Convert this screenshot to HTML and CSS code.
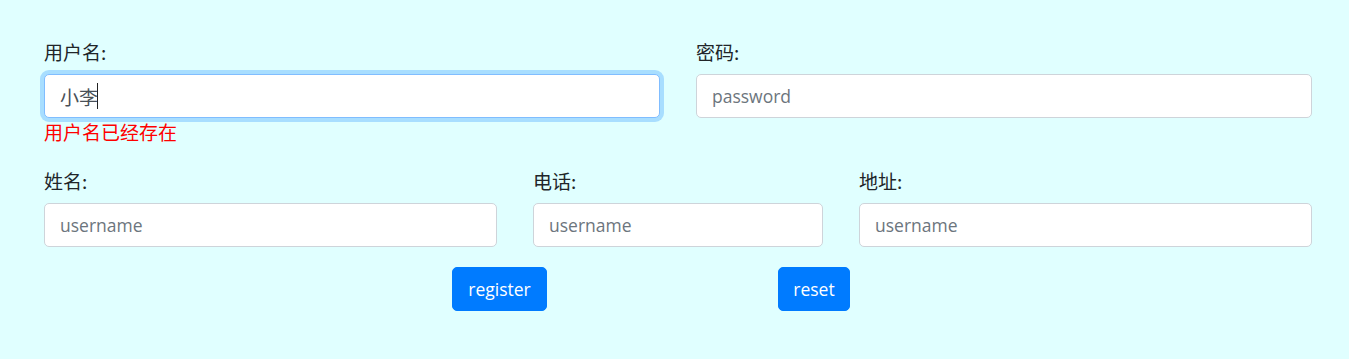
FILE: index.html
```html
<!DOCTYPE html>
<html lang="zh-CN">
<head>
<meta charset="utf-8">
<title>注册</title>
<link rel="stylesheet" href="styles.css">
</head>
<body>
<form class="reg-form">
  <div class="row row-two">
    <div class="field">
      <label class="field-label">用户名:</label>
      <div class="input-wrap">
        <input class="field-input is-focus" type="text" value="小李">
        <span class="caret"></span>
      </div>
      <div class="field-error">用户名已经存在</div>
    </div>
    <div class="field">
      <label class="field-label">密码:</label>
      <input class="field-input" type="password" placeholder="password">
    </div>
  </div>
  <div class="row row-three">
    <div class="field">
      <label class="field-label">姓名:</label>
      <input class="field-input" type="text" placeholder="username">
    </div>
    <div class="field">
      <label class="field-label">电话:</label>
      <input class="field-input" type="text" placeholder="username">
    </div>
    <div class="field">
      <label class="field-label">地址:</label>
      <input class="field-input" type="text" placeholder="username">
    </div>
  </div>
  <div class="actions">
    <button type="button" class="btn btn-register">register</button>
    <button type="button" class="btn btn-reset">reset</button>
  </div>
</form>
</body>
</html>
```
FILE: styles.css
```css
html, body {
  margin: 0;
  padding: 0;
  background: #e0ffff;
}
body {
  font-family: "Open Sans", "Noto Sans CJK SC", sans-serif;
  font-size: 18px;
  line-height: 27px;
  color: #212529;
}
.reg-form {
  width: 1268px;
  padding: 38px 0 0 44px;
}
.row {
  display: grid;
  column-gap: 36px;
}
.row-two {
  grid-template-columns: 1fr 1fr;
  margin-bottom: 22px;
}
.row-three {
  grid-template-columns: 453px 290px 453px;
  margin-bottom: 20px;
}
.field {
  display: flex;
  flex-direction: column;
}
.field-label {
  display: block;
  margin-bottom: 9px;
  font-family: "Noto Sans CJK SC", sans-serif;
  font-size: 19px;
  line-height: 27px;
}
.input-wrap {
  position: relative;
}
.field-input {
  box-sizing: border-box;
  width: 100%;
  height: 44px;
  padding: 7px 15px;
  border: 1px solid #ced4da;
  border-radius: 5px;
  background: #fff;
  font-family: "Open Sans", "Noto Sans CJK SC", sans-serif;
  font-size: 17.5px;
  line-height: 27px;
  color: #495057;
  outline: none;
}
.field-input::placeholder {
  color: #6c757d;
}
.field-input.is-focus {
  border-color: #80bdff;
  box-shadow: 0 0 0 4px rgba(0, 123, 255, 0.25);
  font-family: "Noto Sans CJK SC", sans-serif;
  font-size: 19px;
}
.caret {
  position: absolute;
  left: 53px;
  top: 9px;
  width: 1px;
  height: 26px;
  background: #222;
}
.field-error {
  color: #ff0000;
  font-family: "Noto Sans CJK SC", sans-serif;
  font-size: 19px;
  line-height: 27px;
}
.actions {
  display: flex;
  padding-left: 408px;
}
.btn {
  box-sizing: border-box;
  height: 44px;
  padding: 7px 0;
  border: 1px solid #007bff;
  border-radius: 5px;
  background: #007bff;
  color: #fff;
  font-family: "Open Sans", sans-serif;
  font-size: 17.5px;
  line-height: 27px;
  text-align: center;
}
.btn-register {
  width: 95px;
  margin-right: 231px;
}
.btn-reset {
  width: 72px;
}
```
